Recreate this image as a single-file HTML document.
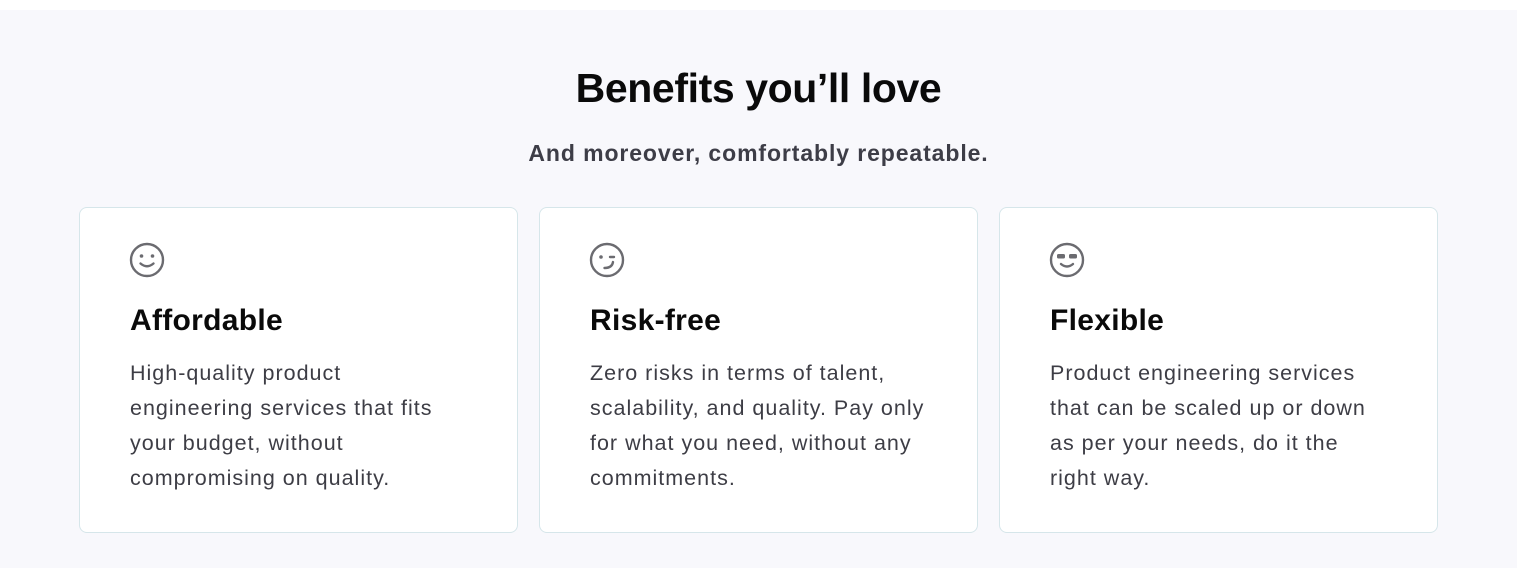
<!DOCTYPE html>
<html><head><meta charset="utf-8"><style>
*{margin:0;padding:0;box-sizing:border-box}
html,body{width:1517px;height:568px;overflow:hidden;background:#fff;font-family:"Liberation Sans",sans-serif}
.sec{position:absolute;top:10px;left:0;width:1517px;height:558px;background:#f8f8fc}
h1{position:absolute;top:65px;left:0;width:1517px;text-align:center;font-size:41px;font-weight:bold;color:#0a0a0a;letter-spacing:-0.4px}
.sub{position:absolute;top:140px;left:0;width:1517px;text-align:center;font-size:23px;font-weight:bold;color:#3d3d47;letter-spacing:0.9px}
.card{position:absolute;top:207px;width:439px;height:326px;background:#fff;border:1px solid #d6e6ea;border-radius:8px}
.card svg{position:absolute;left:49px;top:34px}
.card h2{position:absolute;left:50px;top:96px;font-size:30px;font-weight:bold;color:#0a0a0a;letter-spacing:0.3px}
.card p{position:absolute;left:50px;top:148px;font-size:21.5px;line-height:35px;color:#3d3d45;white-space:nowrap;letter-spacing:1px}
</style></head><body>
<div class="sec"></div>
<h1>Benefits you’ll love</h1>
<div class="sub">And moreover, comfortably repeatable.</div>

<div class="card" style="left:79px">
<svg width="36" height="36" viewBox="0 0 36 36" fill="none" stroke="#6b6b70" stroke-width="2.4" stroke-linecap="round"><circle cx="18" cy="18" r="16"/><circle cx="12.5" cy="14" r="1.8" fill="#6b6b70" stroke="none"/><circle cx="23.5" cy="14" r="1.8" fill="#6b6b70" stroke="none"/><path d="M11.5 21.5 Q18 27 24.5 21.5"/></svg>
<h2>Affordable</h2>
<p>High-quality product<br>engineering services that fits<br>your budget, without<br>compromising on quality.</p>
</div>

<div class="card" style="left:539px">
<svg width="36" height="36" viewBox="0 0 36 36" fill="none" stroke="#6b6b70" stroke-width="2.4" stroke-linecap="round"><circle cx="18" cy="18" r="16"/><circle cx="12" cy="15" r="1.8" fill="#6b6b70" stroke="none"/><path d="M21 15 H25"/><path d="M15.5 26 Q23 26 24 20"/></svg>
<h2>Risk-free</h2>
<p>Zero risks in terms of talent,<br>scalability, and quality. Pay only<br>for what you need, without any<br>commitments.</p>
</div>

<div class="card" style="left:999px">
<svg width="36" height="36" viewBox="0 0 36 36" fill="none" stroke="#6b6b70" stroke-width="2.4" stroke-linecap="round"><circle cx="18" cy="18" r="16"/><rect x="8" y="12" width="8" height="4.5" rx="1.5" fill="#6b6b70" stroke="none"/><rect x="20" y="12" width="8" height="4.5" rx="1.5" fill="#6b6b70" stroke="none"/><path d="M12 22 Q18 27 24 22"/></svg>
<h2>Flexible</h2>
<p>Product engineering services<br>that can be scaled up or down<br>as per your needs, do it the<br>right way.</p>
</div>
</body></html>
